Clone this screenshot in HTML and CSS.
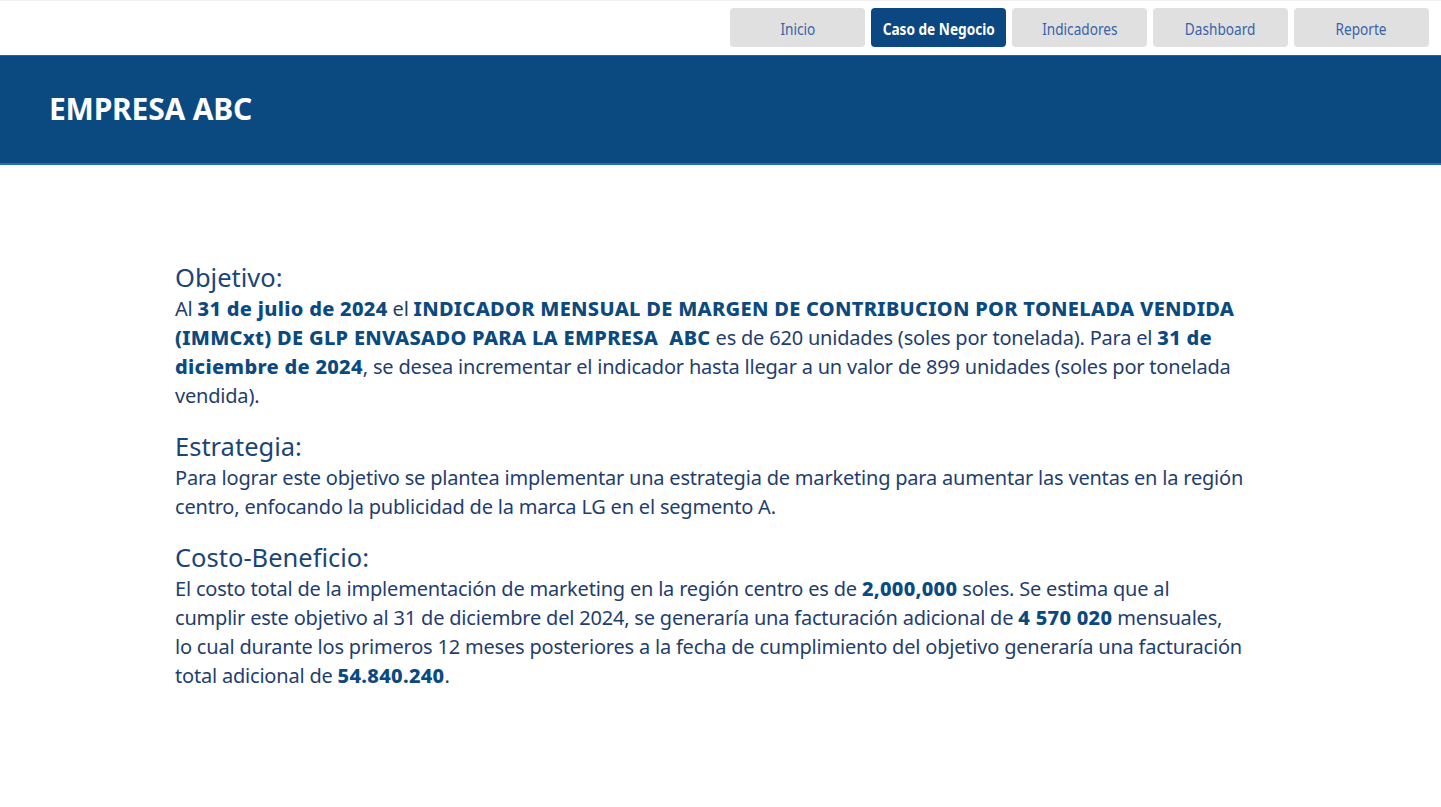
FILE: index.html
```html
<!DOCTYPE html>
<html lang="es">
<head>
<meta charset="utf-8">
<title>Empresa ABC - Caso de Negocio</title>
<link rel="stylesheet" href="styles.css">
</head>
<body>
<nav class="topnav">
  <a class="tab" href="#"><span>Inicio</span></a>
  <a class="tab active" href="#"><span>Caso de Negocio</span></a>
  <a class="tab" href="#"><span>Indicadores</span></a>
  <a class="tab" href="#"><span>Dashboard</span></a>
  <a class="tab" href="#"><span>Reporte</span></a>
</nav>
<header class="banner">
  <h1>EMPRESA ABC</h1>
</header>
<main class="content">
  <section class="block">
    <h2>Objetivo:</h2>
    <p>Al <b>31 de julio de 2024</b> el <b>INDICADOR MENSUAL DE MARGEN DE CONTRIBUCION POR TONELADA VENDIDA (IMMCxt) DE GLP ENVASADO PARA LA EMPRESA&nbsp; ABC</b> es de 620 unidades (soles por tonelada). Para el <b>31 de diciembre de 2024</b>, se desea incrementar el indicador hasta llegar a un valor de 899 unidades (soles por tonelada vendida).</p>
  </section>
  <section class="block">
    <h2>Estrategia:</h2>
    <p>Para lograr este objetivo se plantea implementar una estrategia de marketing para aumentar las ventas en la región centro, enfocando la publicidad de la marca LG en el segmento A.</p>
  </section>
  <section class="block">
    <h2>Costo-Beneficio:</h2>
    <p>El costo total de la implementación de marketing en la región centro es de <b>2,000,000</b> soles. Se estima que al<br>cumplir este objetivo al 31 de diciembre del 2024, se generaría una facturación adicional de <b>4 570 020</b> mensuales,<br>lo cual durante los primeros 12 meses posteriores a la fecha de cumplimiento del objetivo generaría una facturación total adicional de <b>54.840.240</b>.</p>
  </section>
</main>
</body>
</html>
```

FILE: styles.css
```css
* { box-sizing: border-box; }
html, body {
  margin: 0;
  padding: 0;
  background: #ffffff;
  font-family: "Noto Sans", "Open Sans", sans-serif;
}
.topnav {
  display: flex;
  justify-content: flex-end;
  gap: 6px;
  padding: 7px 12px 8px 0;
  border-top: 1px solid #f2f2f2;
}
.tab {
  width: 135px;
  height: 39px;
  display: flex;
  align-items: center;
  justify-content: center;
  padding-top: 2px;
  background: #e0e0e0;
  border-radius: 4px;
  color: #3a62a8;
  text-decoration: none;
  font-size: 15.5px;
}
.tab span {
  display: inline-block;
  transform: scaleX(0.88);
  white-space: nowrap;
}
.tab.active {
  background: #0b4780;
  color: #ffffff;
  font-weight: 700;
}
.banner {
  background: #0b4a80;
  border-top: 1px solid #1565b8;
  border-bottom: 2px solid #1a70c8;
  height: 110px;
  display: flex;
  align-items: center;
  padding-left: 49px;
  padding-bottom: 2px;
}
.banner h1 {
  margin: 0;
  color: #ffffff;
  font-size: 30px;
  font-weight: 700;
  letter-spacing: -0.2px;
}
.content {
  width: 1091px;
  margin: 0 auto;
  padding-top: 97px;
  color: #1f3e6e;
}
.block { margin-bottom: 21px; }
.block h2 {
  margin: 0 0 2px 0;
  font-size: 25.5px;
  font-weight: 400;
  line-height: 30px;
  color: #1b4577;
}
.block p {
  margin: 0;
  font-size: 20px;
  line-height: 29px;
  letter-spacing: -0.2px;
}
.block b {
  font-weight: 800;
  letter-spacing: 0.3px;
  color: #0b4a80;
}
```
